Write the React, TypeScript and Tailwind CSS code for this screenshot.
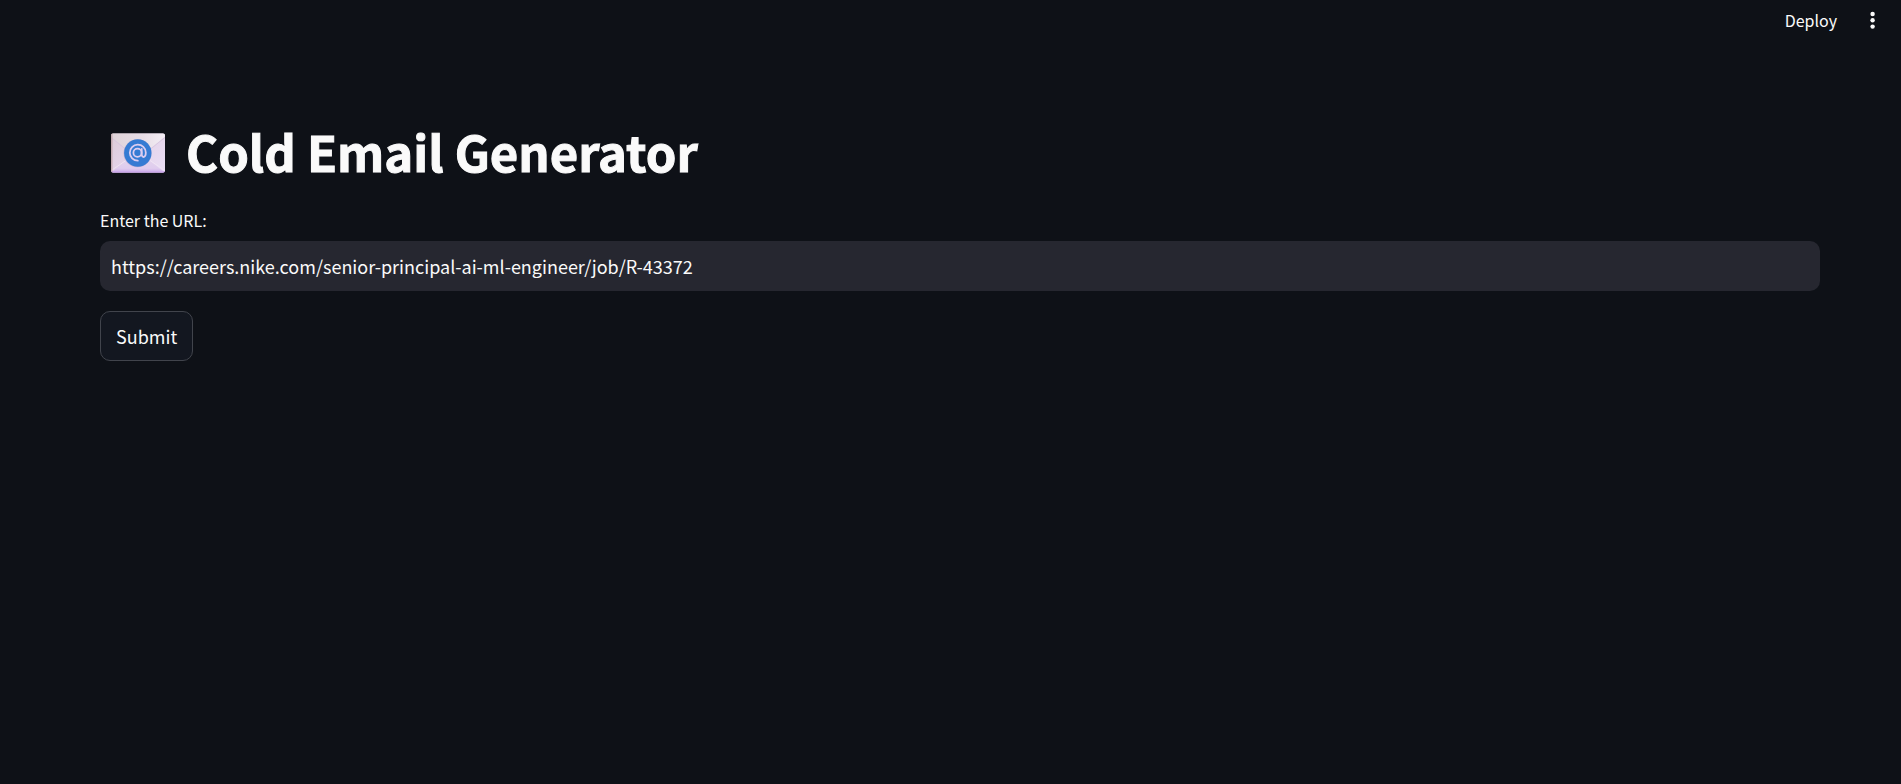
import { useState } from "react";

function EmailIcon() {
  return (
    <svg viewBox="0 0 55 40" className="mt-1 h-10 w-14 shrink-0" aria-hidden="true">
      <defs>
        <linearGradient id="body" x1="0" y1="0" x2="1" y2="0.7">
          <stop offset="0" stopColor="#dccbd6" />
          <stop offset="0.5" stopColor="#e4d3e8" />
          <stop offset="1" stopColor="#e9dcf3" />
        </linearGradient>
        <linearGradient id="flap" x1="0" y1="0" x2="1" y2="0">
          <stop offset="0" stopColor="#dfd3d9" />
          <stop offset="0.6" stopColor="#e7dde6" />
          <stop offset="1" stopColor="#f4eff6" />
        </linearGradient>
        <linearGradient id="bottom" x1="0" y1="0" x2="0" y2="1">
          <stop offset="0" stopColor="#e6d8ec" />
          <stop offset="0.75" stopColor="#dfccee" />
          <stop offset="1" stopColor="#c9a6ea" />
        </linearGradient>
        <linearGradient id="edge" x1="0" y1="0" x2="1" y2="0">
          <stop offset="0" stopColor="#b89a9c" />
          <stop offset="1" stopColor="#b89a9c" stopOpacity="0" />
        </linearGradient>
        <clipPath id="envelope">
          <rect x="0.5" y="0.5" width="54" height="39" rx="2" />
        </clipPath>
      </defs>
      <g clipPath="url(#envelope)">
        <rect width="55" height="40" fill="url(#body)" />
        <path d="M0 40 22 23Q27.500 20 33 23L55 40Z" fill="url(#bottom)" />
        <path d="M0 38 22 23M55 38 33 23" stroke="#f1e6f5" strokeWidth="0.8" fill="none" />
        <path d="M0 3 23 22Q27.500 25 32 22L55 3V0H0Z" fill="url(#flap)" />
        <path d="M0 4 23 22.500Q27.500 25.500 32 22.500L55 4" stroke="#d6c4dc" strokeWidth="0.8" fill="none" />
        <rect y="38" width="55" height="2" fill="#cdabec" />
        <rect width="3" height="40" fill="url(#edge)" />
      </g>
      <circle cx="27" cy="20.300" r="14" fill="#b9a5c9" opacity="0.6" />
      <circle cx="27.300" cy="20" r="13.700" fill="#357bd3" />
      <g fill="none" stroke="#dccdf0" strokeWidth="1.800" strokeLinecap="round">
        <circle cx="27" cy="19.700" r="4.100" />
        <path d="M31.200 15.800V21.300Q31.400 24 33.100 24Q35.300 23.600 35.300 19.500A8 8 0 1 0 27.300 27.700" />
      </g>
    </svg>
  );
}

export default function App() {
  const [url, setUrl] = useState(
    "https://careers.nike.com/senior-principal-ai-ml-engineer/job/R-43372",
  );

  return (
    <div className="min-h-screen bg-[#0e1117] font-['Noto_Sans_CJK_SC','Noto_Sans',sans-serif] text-[#fafafa]">
      <header className="flex h-10 items-center justify-end gap-5 pr-4">
        <button type="button" className="px-1 pb-px text-base leading-6">
          Deploy
        </button>
        <button type="button" aria-label="Main menu" className="flex size-6 items-center justify-center">
          <svg viewBox="0 0 24 24" className="size-6" fill="currentColor" aria-hidden="true">
            <circle cx="11.600" cy="6" r="2.200" />
            <circle cx="11.600" cy="12.300" r="2.200" />
            <circle cx="11.600" cy="18.600" r="2.200" />
          </svg>
        </button>
      </header>

      <main className="pt-20 pr-[81px] pl-25">
        <h1 className="flex items-center gap-5 pl-[10px] text-[49px] leading-[62px] font-bold [-webkit-text-stroke:1px_#fafafa]">
          <EmailIcon />
          Cold Email Generator
        </h1>
        <form className="pt-[26px]" onSubmit={(event) => event.preventDefault()}>
          <label htmlFor="job-url" className="block pb-[9px] text-base leading-6">
            Enter the URL:
          </label>
          <input
            id="job-url"
            type="text"
            value={url}
            onChange={(event) => setUrl(event.target.value)}
            className="block h-[50px] w-full rounded-[10px] bg-[#262730] px-[11px] pb-px text-lg outline-none"
          />
          <button
            type="submit"
            className="mt-5 h-[50px] rounded-[10px] border border-[#41444c] bg-[#131720] px-[15px] pb-px text-lg"
          >
            Submit
          </button>
        </form>
      </main>
    </div>
  );
}
